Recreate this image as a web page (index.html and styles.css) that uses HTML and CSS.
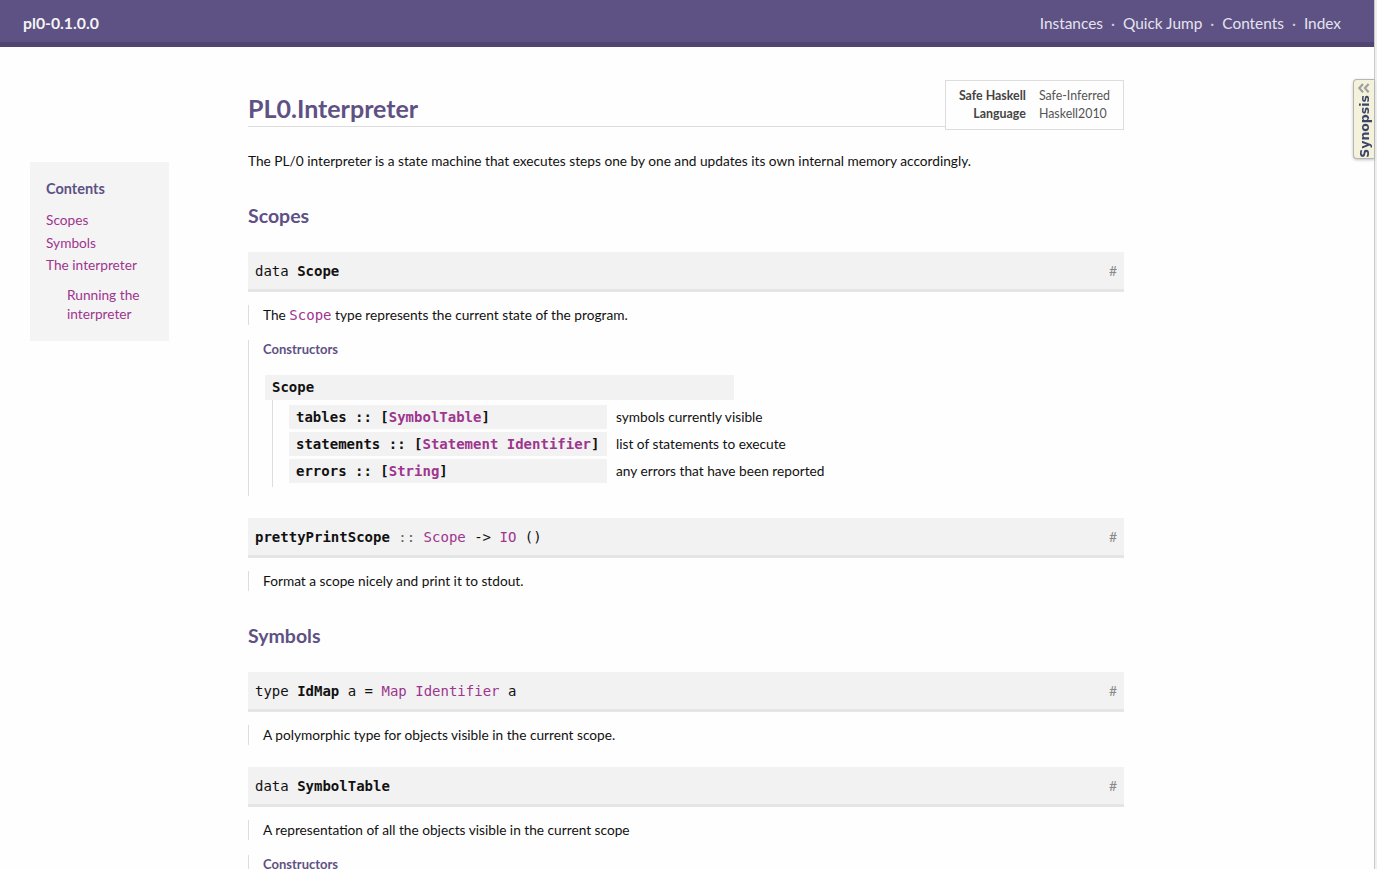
FILE: index.html
```html
<!DOCTYPE html>
<html lang="en">
<head>
<meta charset="utf-8">
<title>PL0.Interpreter</title>
<link rel="stylesheet" href="styles.css">
</head>
<body>
<header class="pkg-header">
  <span class="pkg-caption">pl0-0.1.0.0</span>
  <ul class="page-menu">
    <li><a href="#">Instances</a></li>
    <li class="sep">·</li>
    <li><a href="#">Quick Jump</a></li>
    <li class="sep">·</li>
    <li><a href="#">Contents</a></li>
    <li class="sep">·</li>
    <li><a href="#">Index</a></li>
  </ul>
</header>

<div class="layout">
  <nav class="toc-col">
    <div class="toc">
      <h4 class="toc-title">Contents</h4>
      <ul class="toc-list">
        <li><a href="#">Scopes</a></li>
        <li><a href="#">Symbols</a></li>
        <li><a href="#">The interpreter</a>
          <ul class="toc-sub">
            <li><a href="#">Running the interpreter</a></li>
          </ul>
        </li>
      </ul>
    </div>
  </nav>

  <main class="content">
    <div class="module-header">
      <h1 class="module-caption">PL0.Interpreter</h1>
      <table class="info">
        <tr><th>Safe Haskell</th><td>Safe-Inferred</td></tr>
        <tr><th>Language</th><td>Haskell2010</td></tr>
      </table>
    </div>

    <p class="mod-doc">The PL/0 interpreter is a state machine that executes steps one by one and updates its own internal memory accordingly.</p>

    <h1 class="sec">Scopes</h1>

    <div class="top">
      <p class="src"><span class="code"><span class="kw">data</span> <b>Scope</b></span><a class="selflink" href="#">#</a></p>
      <div class="doc"><p>The <a class="code tlink" href="#">Scope</a> type represents the current state of the program.</p></div>
      <div class="subs">
        <p class="subs-caption">Constructors</p>
        <div class="con-head code"><b>Scope</b></div>
        <div class="fields">
          <div class="field-src code"><b>tables</b> <b>::</b> <b>[<a class="tlink" href="#">SymbolTable</a>]</b></div>
          <div class="field-doc">symbols currently visible</div>
          <div class="field-src code"><b>statements</b> <b>::</b> <b>[<a class="tlink" href="#">Statement</a> <a class="tlink" href="#">Identifier</a>]</b></div>
          <div class="field-doc">list of statements to execute</div>
          <div class="field-src code"><b>errors</b> <b>::</b> <b>[<a class="tlink" href="#">String</a>]</b></div>
          <div class="field-doc">any errors that have been reported</div>
        </div>
      </div>
    </div>

    <div class="top">
      <p class="src"><span class="code"><b>prettyPrintScope</b> <span class="dim">::</span> <a class="tlink" href="#">Scope</a> -&gt; <a class="tlink" href="#">IO</a> ()</span><a class="selflink" href="#">#</a></p>
      <div class="doc"><p>Format a scope nicely and print it to stdout.</p></div>
    </div>

    <h1 class="sec">Symbols</h1>

    <div class="top">
      <p class="src"><span class="code"><span class="kw">type</span> <b>IdMap</b> a = <a class="tlink" href="#">Map</a> <a class="tlink" href="#">Identifier</a> a</span><a class="selflink" href="#">#</a></p>
      <div class="doc"><p>A polymorphic type for objects visible in the current scope.</p></div>
    </div>

    <div class="top">
      <p class="src"><span class="code"><span class="kw">data</span> <b>SymbolTable</b></span><a class="selflink" href="#">#</a></p>
      <div class="doc"><p>A representation of all the objects visible in the current scope</p></div>
      <div class="subs">
        <p class="subs-caption">Constructors</p>
      </div>
    </div>
  </main>
</div>

<div class="synopsis-edge"></div>
<div class="synopsis-tab">
  <svg class="syn-icon" width="14" height="11" viewBox="0 0 14 11" aria-hidden="true">
    <path d="M6 1 L2 5.5 L6 10 M12 1 L8 5.5 L12 10" fill="none" stroke="#a0a0a0" stroke-width="2.4"/>
  </svg>
  <span class="syn-text">Synopsis</span>
</div>
</body>
</html>
```

FILE: styles.css
```css
html, body {
  margin: 0;
  padding: 0;
}

body {
  font-family: Lato, "Liberation Sans", sans-serif;
  font-size: 13.7px;
  line-height: 20px;
  color: #111;
  background: #fefefe;
  overflow: hidden;
  height: 869px;
}

a {
  color: #9e358f;
  text-decoration: none;
}

.code {
  font-family: "DejaVu Sans Mono", monospace;
  font-size: 14px;
}

/* ---------- package header ---------- */
.pkg-header {
  display: flex;
  align-items: center;
  justify-content: space-between;
  height: 39px;
  padding: 3px 36px 0 23px;
  background: #5e5184;
  border-bottom: 5px solid #514672;
}

.pkg-caption {
  color: #f4f4f4;
  font-weight: 700;
  font-size: 15.8px;
}

.page-menu {
  display: flex;
  list-style: none;
  margin: 0;
  padding: 0;
  font-size: 15.4px;
}

.page-menu a {
  color: #e4e4ee;
}

.page-menu .sep {
  color: #cfcfdd;
  padding: 0 8px;
}

/* ---------- layout ---------- */
.layout {
  display: grid;
  grid-template-columns: 248px 876px 1fr;
}

.toc-col {
  padding: 115px 0 0 30px;
}

.toc {
  width: 107px;
  background: #f4f4f4;
  padding: 17px 16px 14px;
}

.toc-title {
  margin: 0 0 11px;
  font-size: 14.5px;
  line-height: 20px;
  color: #5e5184;
  font-weight: 700;
}

.toc-list,
.toc-sub {
  list-style: none;
  margin: 0;
  padding: 0;
}

.toc-list li {
  line-height: 19px;
  margin-bottom: 3.5px;
}

.toc-sub {
  margin-top: 11px;
  padding-left: 21px;
}

/* ---------- content ---------- */
.content {
  padding-top: 33px;
}

.module-header {
  display: flex;
  align-items: flex-start;
}

.module-caption {
  flex: 1;
  margin: 0;
  height: 44px;
  padding-bottom: 2px;
  display: flex;
  align-items: flex-end;
  font-size: 25px;
  line-height: 32px;
  font-weight: 700;
  color: #5e5184;
  border-bottom: 1px solid #ddd;
}

.info {
  border: 1px solid #ddd;
  border-collapse: separate;
  border-spacing: 0;
  padding: 6px 13px 6px 13px;
  font-size: 12.4px;
  line-height: 18px;
}

.info th {
  text-align: right;
  font-weight: 700;
  padding: 0 13px 0 0;
  color: #444;
}

.info td {
  padding: 0;
  color: #555;
}

.mod-doc {
  margin: 21px 0 0;
}

.sec {
  margin: 32px 0 23px;
  font-size: 19.5px;
  line-height: 26px;
  font-weight: 700;
  color: #5e5184;
}

.top {
  margin-bottom: 22px;
}

.top + .sec {
  margin-top: 32px;
  margin-bottom: 23px;
}

.src {
  display: flex;
  justify-content: space-between;
  align-items: center;
  margin: 0;
  padding: 1px 7px 0 7px;
  box-sizing: content-box;
  height: 36px;
  background: #f2f2f2;
  border-bottom: 3px solid #e5e5e5;
}

.src .code {
  line-height: 21px;
}

.kw {
  color: #111;
}

.dim {
  color: #666;
}

.tlink {
  color: #9e358f;
}

.selflink {
  color: #8a8a8a;
  font-size: 14px;
}

.doc {
  margin-top: 13px;
  border-left: 1px solid #ddd;
  padding-left: 14px;
}

.doc p {
  margin: 0;
}

.subs {
  margin-top: 15px;
  border-left: 1px solid #ddd;
  padding: 0 0 9px 14px;
}

.subs-caption {
  margin: 0;
  font-size: 13px;
  line-height: 18px;
  font-weight: 700;
  color: #5e5184;
}

.con-head {
  margin: 17px 0 0 2px;
  width: 462px;
  height: 25px;
  line-height: 25px;
  padding-left: 7px;
  background: #f2f2f2;
}

.fields {
  display: grid;
  grid-template-columns: 318px auto;
  column-gap: 9px;
  row-gap: 3px;
  margin-left: 9px;
  padding: 5px 0 4px 16px;
  border-left: 1px solid #ddd;
  justify-content: start;
}

.field-src {
  background: #f2f2f2;
  height: 24px;
  line-height: 24px;
  padding-left: 7px;
}

.field-src a {
  font-weight: 700;
}

.field-doc {
  line-height: 24px;
}

/* ---------- synopsis ---------- */
.synopsis-edge {
  position: fixed;
  top: 0;
  right: 0;
  width: 2px;
  height: 100%;
  background: #efefef;
  border-left: 1px solid #c9c9c9;
}

.synopsis-tab {
  position: fixed;
  top: 79px;
  right: 3px;
  width: 21px;
  height: 80px;
  display: flex;
  flex-direction: column;
  align-items: center;
  gap: 2px;
  padding-top: 3px;
  box-sizing: border-box;
  background: #f5f2dc;
  border: 1px solid #b5b5b5;
  border-right: none;
  border-radius: 4px 0 0 4px;
  box-shadow: 0 1px 3px rgba(0, 0, 0, 0.25);
}

.syn-text {
  writing-mode: vertical-rl;
  transform: rotate(180deg);
  font-family: "DejaVu Sans", sans-serif;
  font-weight: 700;
  font-size: 12.5px;
  line-height: 17px;
  color: #3c4468;
}
```
